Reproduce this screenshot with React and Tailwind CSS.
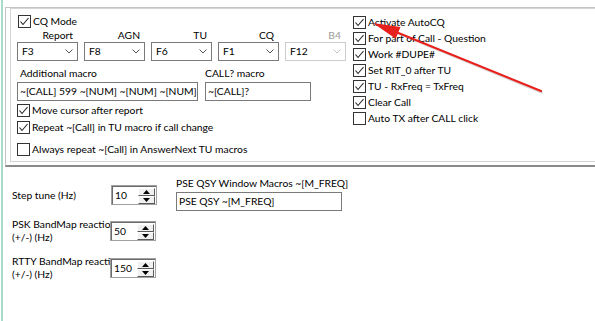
import React from "react";

const Check = ({ checked }) => (
  <svg width="13" height="13" viewBox="0 0 13 13" className="shrink-0">
    <rect x="0.5" y="0.5" width="12" height="12" fill="#fff" stroke="#333333" />
    {checked && <path d="M2.5 6.5 L5 9.5 L10.5 3" fill="none" stroke="#222" strokeWidth="1.1" />}
  </svg>
);

const CheckRow = ({ checked, label, className = "" }) => (
  <div className={`flex items-center gap-[2px] h-[16px] whitespace-nowrap ${className}`}>
    <Check checked={checked} />
    <span>{label}</span>
  </div>
);

const Combo = ({ value, disabled }) => (
  <div
    className={`w-[61px] h-[19px] flex items-center justify-between pl-[4px] pr-[4px] bg-white border ${
      disabled ? "border-[#cccccc]" : "border-[#7a7a7a]"
    }`}
  >
    <span>{value}</span>
    <svg width="8" height="5" viewBox="0 0 8 5">
      <path d="M0.5 0.5 L4 4 L7.5 0.5" fill="none" stroke={disabled ? "#c4c4c4" : "#555"} />
    </svg>
  </div>
);

const TextBox = ({ value, className = "" }) => (
  <div className={`h-[19px] border border-[#7a7a7a] bg-white flex items-center pl-[2px] whitespace-pre overflow-hidden ${className}`}>
    {value}
  </div>
);

const SpinBtn = ({ up }) => (
  <div className="h-[8px] w-[17px] bg-[#f0f0f0] border-t border-l border-t-white border-l-white border-b border-r border-b-[#5a5a5a] border-r-[#5a5a5a] flex items-center justify-center">
    <svg width="7" height="4" viewBox="0 0 7 4">
      {up ? <path d="M0 4 L3.5 0 L7 4 Z" fill="#000" /> : <path d="M0 0 L3.5 4 L7 0 Z" fill="#000" />}
    </svg>
  </div>
);

// spin box sits over the end of a long label, like the WinForms control does
const Spin = ({ value }) => (
  <div className="relative z-10 w-[46px] h-[20px] shrink-0 border border-[#a0a0a0] bg-white">
    <div className="h-full flex border-t border-l border-[#6b6b6b]">
      <div className="flex-1 flex items-center pl-[2px]">{value}</div>
      <div className="flex flex-col justify-center pr-[1px]">
        <SpinBtn up />
        <SpinBtn />
      </div>
    </div>
  </div>
);

const COMBOS = [
  { label: "Report", value: "F3" },
  { label: "AGN", value: "F8" },
  { label: "TU", value: "F6" },
  { label: "CQ", value: "F1" },
  { label: "B4", value: "F12", disabled: true },
];

const RIGHT_CHECKS = [
  { label: "Activate AutoCQ", checked: true },
  { label: "For part of Call - Question", checked: true },
  { label: "Work #DUPE#", checked: true },
  { label: "Set RIT_0 after TU", checked: true },
  { label: "TU -  RxFreq = TxFreq", checked: true },
  { label: "Clear Call", checked: true },
  { label: "Auto TX after CALL click", checked: false },
];

export default function App() {
  return (
    <div className="w-[595px] h-[321px] bg-white flex overflow-hidden relative text-[10.3px] leading-[13px] text-black font-['Lato','Segoe_UI',sans-serif]">
      {/* window edge */}
      <div className="ml-[1px] w-[2px] bg-[#a6dccb] shrink-0" />

      <div className="flex-1 flex flex-col">
        {/* tab page */}
        <div className="mt-[7px] ml-[2px] border-t border-l border-[#c4c4c4] border-b-2 border-b-[#8a8a8a] pb-[3px]">
          <div className="ml-[4px] h-[154px] border-l border-t border-b border-[#d5d5d5] flex">
            {/* left column */}
            <div className="w-[336px] pl-[6px] flex flex-col">
              <CheckRow checked label="CQ Mode" className="mt-[4px] h-[14px] ml-[1px]" />

              <div className="flex gap-[6px] h-[13px]">
                {COMBOS.map((c) => (
                  <div
                    key={c.label}
                    className={`w-[61px] text-right pr-[5px] ${c.disabled ? "text-[#9a9a9a]" : ""}`}
                  >
                    {c.label}
                  </div>
                ))}
              </div>
              <div className="flex gap-[6px]">
                {COMBOS.map((c) => (
                  <Combo key={c.label} value={c.value} disabled={c.disabled} />
                ))}
              </div>

              <div className="flex gap-[7px] mt-[6px]">
                <div className="w-[181px] flex flex-col">
                  <div className="h-[14px] pl-[3px]">Additional macro</div>
                  <TextBox className="mt-[1px]" value="~[CALL] 599 ~[NUM] ~[NUM] ~[NUM]" />
                </div>
                <div className="w-[106px] flex flex-col">
                  <div className="h-[14px]">CALL? macro</div>
                  <TextBox className="mt-[1px]" value="~[CALL]?" />
                </div>
              </div>

              <CheckRow checked label="Move cursor after report" className="mt-[1px]" />
              <CheckRow checked label="Repeat ~[Call] in TU macro if call change" className="mt-[1px]" />
              <CheckRow checked={false} label="Always repeat ~[Call] in AnswerNext TU macros" className="mt-[6px]" />
            </div>

            {/* right column */}
            <div className="ml-[6px] mt-[5px] flex flex-col">
              {RIGHT_CHECKS.map((c) => (
                <CheckRow key={c.label} checked={c.checked} label={c.label} />
              ))}
            </div>
          </div>
        </div>

        {/* lower settings */}
        <div className="flex pl-[9px]">
          <div className="w-[145px] flex flex-col">
            <div className="mt-[18px] flex items-center">
              <div className="w-[99px]">Step tune (Hz)</div>
              <Spin value="10" />
            </div>
            <div className="mt-[13px] h-[26px] flex items-center">
              <div className="w-[98px] shrink-0 whitespace-nowrap">
                PSK BandMap reaction
                <br />
                (+/-) (Hz)
              </div>
              <Spin value="50" />
            </div>
            <div className="mt-[11px] h-[26px] flex items-center">
              <div className="w-[98px] shrink-0 whitespace-nowrap">
                RTTY BandMap reaction
                <br />
                (+/-) (Hz)
              </div>
              <Spin value="150" />
            </div>
          </div>

          <div className="ml-[19px] mt-[10px] flex flex-col">
            <div className="h-[13px]">PSE QSY Window Macros ~[M_FREQ]</div>
            <TextBox className="mt-[2px] w-[166px]" value="PSE QSY ~[M_FREQ]" />
          </div>
        </div>
      </div>

      {/* red annotation arrow */}
      <svg className="absolute left-0 top-0 pointer-events-none z-20" width="595" height="321" viewBox="0 0 595 321">
        <line x1="542.5" y1="93" x2="398" y2="33.5" stroke="#000" strokeOpacity="0.15" strokeWidth="2" />
        <line x1="541" y1="91" x2="396" y2="32" stroke="#e8201c" strokeWidth="2.2" strokeLinecap="round" />
        <polygon points="373,23 400.5,27 395.7,38.7" fill="#e8201c" />
      </svg>
    </div>
  );
}
